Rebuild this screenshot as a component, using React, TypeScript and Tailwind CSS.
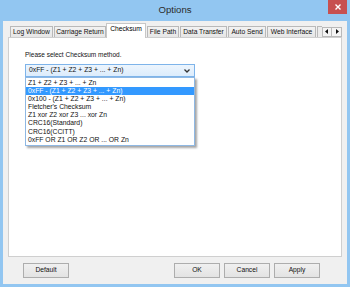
import React from "react";

const TABS: [string, string][] = [
  ["Log Window", "w-[43px]"],
  ["Carriage Return", "w-[52px]"],
  ["Checksum", "w-[42px]"],
  ["File Path", "w-[32px]"],
  ["Data Transfer", "w-[47px]"],
  ["Auto Send", "w-[38px]"],
  ["Web Interface", "w-[49px]"],
];

const METHODS = [
  "Z1 + Z2 + Z3 + ... + Zn",
  "0xFF - (Z1 + Z2 + Z3 + ... + Zn)",
  "0x100 - (Z1 + Z2 + Z3 + ... + Zn)",
  "Fletcher's Checksum",
  "Z1 xor Z2 xor Z3 ... xor Zn",
  "CRC16(Standard)",
  "CRC16(CCITT)",
  "0xFF OR Z1 OR Z2 OR ... OR Zn",
];

function Button({ label }: { label: string }) {
  return (
    <div className="w-[46px] h-[15px] flex items-center justify-center border border-[#adadad] bg-gradient-to-b from-[#f0f0f0] to-[#e3e3e3] text-[6.7px] text-[#111]">
      {label}
    </div>
  );
}

export default function App() {
  const selected = 1;

  return (
    <div
      className="w-[350px] h-[287px] bg-[#92c6f1] flex flex-col"
      style={{ fontFamily: '"Liberation Sans", Arial, sans-serif' }}
    >
      {/* title bar */}
      <div className="h-[21px] grid grid-cols-[1fr_auto_1fr] items-start">
        <div />
        <div className="pt-[3px] text-[9.6px] text-[#2b2b2b]">Options</div>
        <div className="flex justify-end pr-[3px]">
          <div className="w-[19px] h-[14px] bg-[#c75050] flex items-center justify-center">
            <svg width="6" height="6" viewBox="0 0 6 6">
              <path d="M0.5 0.5 L5.5 5.5 M5.5 0.5 L0.5 5.5" stroke="#fff" strokeWidth="1.4" />
            </svg>
          </div>
        </div>
      </div>

      <div className="flex-1 mx-[3px] mb-[3px] bg-[#f0f0f0] flex flex-col px-[5px]">
        {/* tabs */}
        <div className="h-[16px] pt-[2px] flex items-end pl-[2px] relative z-10 whitespace-nowrap">
          {TABS.map(([t, w]) =>
            t === "Checksum" ? (
              <div
                key={t}
                className={
                  w +
                  " h-[15px] -mb-px mr-px flex items-center justify-center border border-b-0 border-[#c7c7c7] bg-white text-[6.7px] text-black -ml-px"
                }
              >
                <span className="-mt-[3px]">{t}</span>
              </div>
            ) : (
              <div
                key={t}
                className={
                  w +
                  " h-[11px] mr-px shrink-0 flex items-center justify-center border border-b-0 border-[#b9b9b9] bg-gradient-to-b from-[#f2f2f2] to-[#e6e6e6] text-[6.7px] text-[#111] overflow-hidden"
                }
              >
                {t}
              </div>
            )
          )}
          <div className="h-[11px] w-[5px] border border-b-0 border-r-0 border-[#b9b9b9] bg-[#ececec] shrink-0" />
          <div className="h-[11px] flex items-center ml-auto">
            <div className="w-[10px] h-[10px] border border-[#b9b9b9] bg-[#f4f4f4] flex items-center justify-center">
              <svg width="4" height="5" viewBox="0 0 4 5">
                <path d="M3 0 L0 2.5 L3 5 Z" fill="#111" />
              </svg>
            </div>
            <div className="w-[10px] h-[10px] border border-l-0 border-[#b9b9b9] bg-[#f4f4f4] flex items-center justify-center">
              <svg width="4" height="5" viewBox="0 0 4 5">
                <path d="M1 0 L4 2.5 L1 5 Z" fill="#111" />
              </svg>
            </div>
          </div>
        </div>

        {/* panel */}
        <div className="h-[220px] border border-[#cfcfcf] bg-white pl-[16px] pt-[13px]">
          <div className="text-[6.5px] text-[#111] leading-[8px]">Please select Checksum method.</div>
          <div className="relative mt-[5px] w-[170px]">
            <div className="h-[13px] border border-[#7eb4ea] bg-gradient-to-b from-[#edf5fd] to-[#dcecfc] flex items-center pl-[3px] pr-[4px] text-[6.8px] text-[#111]">
              <span className="flex-1">0xFF - (Z1 + Z2 + Z3 + ... + Zn)</span>
              <svg width="6" height="4" viewBox="0 0 6 4">
                <path d="M0.5 0.5 L3 3 L5.5 0.5" stroke="#333" strokeWidth="1.3" fill="none" />
              </svg>
            </div>
            <div className="absolute left-0 top-[13px] w-[170px] border border-[#8fb8e3] bg-white py-[1px] shadow-[2px_2px_2px_rgba(0,0,0,0.35)]">
              {METHODS.map((m, i) => (
                <div
                  key={m}
                  className={
                    "h-[8.1px] flex items-center pl-[2px] text-[6.8px] " +
                    (i === selected ? "bg-[#3399ff] text-white" : "text-[#111]")
                  }
                >
                  {m}
                </div>
              ))}
            </div>
          </div>
        </div>

        {/* buttons */}
        <div className="flex items-center mt-[6px] pl-[15px]">
          <Button label="Default" />
          <div className="flex-1" />
          <div className="flex gap-[4px] pr-[22px]">
            <Button label="OK" />
            <Button label="Cancel" />
            <Button label="Apply" />
          </div>
        </div>
      </div>
    </div>
  );
}
